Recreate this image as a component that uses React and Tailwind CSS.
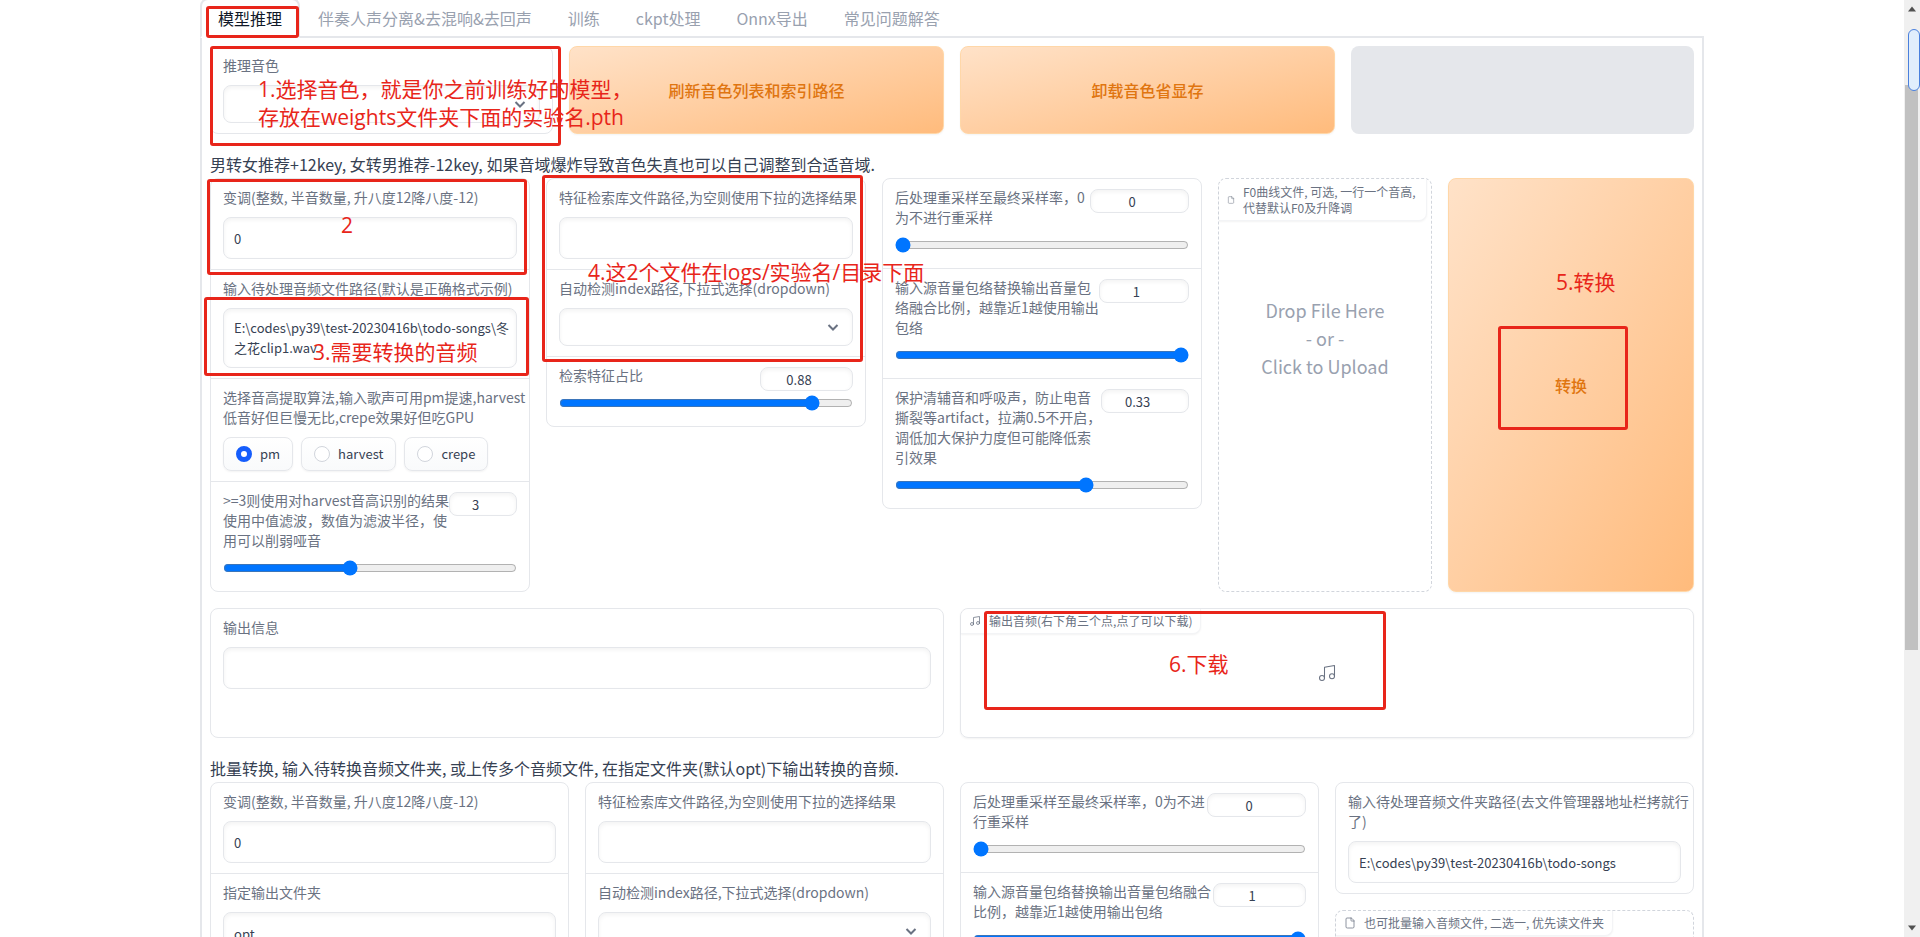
import React, { useId, useState } from 'react';
import { File as FileIcon, Music } from 'lucide-react';

const tabs = ['模型推理', '伴奏人声分离&去混响&去回声', '训练', 'ckpt处理', 'Onnx导出', '常见问题解答'];

const fieldClass =
  'block w-full rounded-lg border border-gray-200 bg-white text-[13px] text-gray-700 shadow-[inset_0_2px_4px_0_rgba(0,0,0,0.05)] outline-none';

// Form group: bordered card, blocks are separated by a thin line
function Form({ children, className = '' }) {
  return (
    <div className={`divide-y divide-gray-200 rounded-lg border border-gray-200 bg-white ${className}`}>
      {children}
    </div>
  );
}

function Label({ htmlFor, children }) {
  return (
    <label htmlFor={htmlFor} className="mb-2.5 block shrink-0 text-sm leading-5 whitespace-pre text-gray-500">
      {children}
    </label>
  );
}

function TextField({ label, value = '', multiline = false }) {
  const id = useId();
  const [text, setText] = useState(value);
  return (
    <div className="px-3 pt-2 pb-2.5">
      <Label htmlFor={id}>{label}</Label>
      {multiline ? (
        <textarea
          id={id}
          value={text}
          onChange={(e) => setText(e.target.value)}
          className={`${fieldClass} h-[60px] resize-none overflow-hidden py-[9px] pr-1 pl-2.5 leading-5 break-all`}
        />
      ) : (
        <input
          id={id}
          type="text"
          value={text}
          onChange={(e) => setText(e.target.value)}
          className={`${fieldClass} h-[42px] px-2.5`}
        />
      )}
    </div>
  );
}

function Dropdown({ label }) {
  const id = useId();
  return (
    <div className="px-3 pt-2 pb-2.5">
      <Label htmlFor={id}>{label}</Label>
      <div className="relative">
        <select id={id} className={`${fieldClass} h-[38px] appearance-none px-2.5`}>
          <option value=""></option>
        </select>
        <svg
          className="pointer-events-none absolute top-1/2 right-3.5 h-3 w-3 -translate-y-1/2 text-gray-500"
          viewBox="0 0 12 12"
          fill="none"
          stroke="currentColor"
          strokeWidth={2}
        >
          <path d="M1.5 4l4.5 4.5L10.5 4" />
        </svg>
      </div>
    </div>
  );
}

function Slider({ label, value, min = 0, max = 1, step = 0.01, box = 'w-[93px]' }) {
  const id = useId();
  const [current, setCurrent] = useState(value);
  return (
    <div className="px-3 pt-2 pb-[15px]">
      <div className="flex items-start justify-between">
        <Label htmlFor={id}>{label}</Label>
        <input
          type="number"
          aria-label={label}
          value={current}
          min={min}
          max={max}
          step={step}
          onChange={(e) => setCurrent(e.target.value)}
          className={`${box} mt-0.5 h-6 min-w-0 rounded-lg border border-gray-200 bg-white px-2 text-center text-[13px] text-gray-700 shadow-[inset_0_2px_4px_0_rgba(0,0,0,0.05)] outline-none`}
        />
      </div>
      <input
        id={id}
        type="range"
        value={current}
        min={min}
        max={max}
        step={step}
        onChange={(e) => setCurrent(e.target.value)}
        className="block h-4 w-full accent-[#0075ff]"
      />
    </div>
  );
}

function RadioGroup({ label, options }) {
  const name = useId();
  const [selected, setSelected] = useState(options[0]);
  return (
    <fieldset className="w-full min-w-0 px-3 pt-2 pb-2.5">
      <legend className="float-left mb-2.5 w-full text-sm leading-5 whitespace-pre text-gray-500">{label}</legend>
      <div className="clear-both flex gap-2">
        {options.map((option) => (
          <label
            key={option}
            className="flex h-[34px] items-center gap-2 rounded-lg border border-gray-200 bg-gradient-to-b from-white to-gray-50 px-3 text-[13px] text-gray-700 shadow-xs"
          >
            <input
              type="radio"
              name={name}
              checked={selected === option}
              onChange={() => setSelected(option)}
              className="h-4 w-4 appearance-none rounded-full border border-gray-300 bg-white checked:border-5 checked:border-blue-600"
            />
            {option}
          </label>
        ))}
      </div>
    </fieldset>
  );
}

function PrimaryButton({ children }) {
  return (
    <button
      type="button"
      className="rounded-lg border border-orange-200 bg-linear-to-br from-[#ffe2c8] to-[#ffbb7c] text-base font-medium text-[#e07510] shadow-xs"
    >
      {children}
    </button>
  );
}

// Small caption in the top left corner of a file or audio block
function BlockLabel({ icon: Icon, iconSize = 'h-3 w-3', children, className = '' }) {
  return (
    <div
      className={`flex items-center gap-2 rounded-tl-lg rounded-br-lg border-r border-b border-gray-100 bg-white px-2 py-1 text-xs leading-4 text-gray-500 shadow-xs ${className}`}
    >
      <Icon className={`${iconSize} shrink-0 text-gray-500`} strokeWidth={1.5} />
      <span className="whitespace-pre">{children}</span>
    </div>
  );
}

// Red frames and notes over the page
function Mark({ className }) {
  return <div className={`absolute rounded-[3px] border-3 border-[#e8251a] ${className}`} />;
}

function Note({ className, children }) {
  return (
    <p
      className={`absolute font-['Open_Sans','Noto_Sans_CJK_SC',sans-serif] text-[21px] leading-7 whitespace-pre text-[#e8251a] ${className}`}
    >
      {children}
    </p>
  );
}

function Notes() {
  return (
    <div className="pointer-events-none absolute inset-0">
      <Mark className="top-[6px] left-[6px] h-[32px] w-[93px]" />
      <Mark className="top-[46px] left-[10px] h-[100px] w-[351px]" />
      <Mark className="top-[179px] left-[7px] h-[96px] w-[320px]" />
      <Mark className="top-[297px] left-[4px] h-[79px] w-[325px]" />
      <Mark className="top-[175px] left-[342px] h-[187px] w-[321px]" />
      <Mark className="top-[326px] left-[1298px] h-[104px] w-[130px]" />
      <Mark className="top-[611px] left-[784px] h-[99px] w-[402px]" />
      <Note className="top-[75px] left-[58px]">{'1.选择音色，就是你之前训练好的模型，\n存放在weights文件夹下面的实验名.pth'}</Note>
      <Note className="top-[211px] left-[141px]">2</Note>
      <Note className="top-[338px] left-[113px]">3.需要转换的音频</Note>
      <Note className="top-[258px] left-[388px]">4.这2个文件在logs/实验名/目录下面</Note>
      <Note className="top-[268px] left-[1356px]">5.转换</Note>
      <Note className="top-[650px] left-[969px]">6.下载</Note>
    </div>
  );
}

function ScrollBar() {
  return (
    <div className="relative flex w-4 shrink-0 flex-col items-center justify-between bg-[#f0f0f0] py-1.5">
      <svg className="h-1.5 w-2" viewBox="0 0 8 5" fill="#505050">
        <path d="M4 0l4 5H0z" />
      </svg>
      <svg className="h-1.5 w-2" viewBox="0 0 8 5" fill="#505050">
        <path d="M4 5L0 0h8z" />
      </svg>
      <div className="absolute top-[85px] left-px h-[565px] w-[13px] bg-[#c1c1c1]" />
      <div className="absolute top-[29px] right-0 h-[62px] w-3 rounded-full border border-[#4a80dd] bg-[#e1eefc]" />
    </div>
  );
}

export default function App() {
  const [tab, setTab] = useState(0);

  return (
    <div className="flex h-screen overflow-hidden bg-white font-['Noto_Sans_CJK_SC',sans-serif]">
      <main className="min-w-0 flex-1 overflow-hidden">
        <div className="relative mx-auto flow-root max-w-[1504px]">
          {/* Tabs */}
          <nav className="-mt-0.5 -mb-0.5 flex">
            {tabs.map((name, i) => (
              <button
                key={name}
                type="button"
                onClick={() => setTab(i)}
                className={
                  i === tab
                    ? 'relative h-10 rounded-t-lg border-2 border-gray-200 border-b-white bg-white px-4 text-base text-gray-900'
                    : 'h-10 border-2 border-transparent px-4 text-base text-gray-400'
                }
              >
                {name}
              </button>
            ))}
          </nav>

          <div className="flex flex-col gap-4 border-2 border-gray-200 p-2">
            <div className="grid grid-cols-[343fr_375fr_375fr_343fr] gap-4">
              <Form>
                <Dropdown label="推理音色" />
              </Form>
              <PrimaryButton>刷新音色列表和索引路径</PrimaryButton>
              <PrimaryButton>卸载音色省显存</PrimaryButton>
              <div className="rounded-lg bg-gray-200" />
            </div>

            <div>
              <p className="text-base leading-7 text-gray-700">
                男转女推荐+12key, 女转男推荐-12key, 如果音域爆炸导致音色失真也可以自己调整到合适音域.
              </p>
              <div className="grid grid-cols-[minmax(0,320fr)_minmax(0,320fr)_minmax(0,320fr)_minmax(0,214fr)_minmax(0,246fr)] gap-4">
                <Form>
                  <TextField label="变调(整数, 半音数量, 升八度12降八度-12)" value="0" />
                  <TextField
                    label="输入待处理音频文件路径(默认是正确格式示例)"
                    value="E:\codes\py39\test-20230416b\todo-songs\冬之花clip1.wav"
                    multiline
                  />
                  <RadioGroup
                    label={'选择音高提取算法,输入歌声可用pm提速,harvest\n低音好但巨慢无比,crepe效果好但吃GPU'}
                    options={['pm', 'harvest', 'crepe']}
                  />
                  <Slider
                    label={'>=3则使用对harvest音高识别的结果\n使用中值滤波，数值为滤波半径，使\n用可以削弱哑音'}
                    value={3}
                    max={7}
                    step={1}
                    box="w-[73px]"
                  />
                </Form>

                <Form className="self-start">
                  <TextField label="特征检索库文件路径,为空则使用下拉的选择结果" />
                  <Dropdown label="自动检测index路径,下拉式选择(dropdown)" />
                  <Slider label="检索特征占比" value={0.88} />
                </Form>

                <Form className="self-start">
                  <Slider
                    label={'后处理重采样至最终采样率，0\n为不进行重采样'}
                    value={0}
                    max={48000}
                    step={1}
                    box="w-[99px]"
                  />
                  <Slider label={'输入源音量包络替换输出音量包\n络融合比例，越靠近1越使用输出\n包络'} value={1} />
                  <Slider
                    label={'保护清辅音和呼吸声，防止电音\n撕裂等artifact，拉满0.5不开启，\n调低加大保护力度但可能降低索\n引效果'}
                    value={0.33}
                    max={0.5}
                  />
                </Form>

                <div className="flex flex-col rounded-lg border border-dashed border-gray-300">
                  <BlockLabel icon={FileIcon} iconSize="h-2 w-2" className="mr-1 h-[42px]">
                    {'F0曲线文件, 可选, 一行一个音高,\n代替默认F0及升降调'}
                  </BlockLabel>
                  <button type="button" className="mt-[75px] text-lg leading-7 text-gray-400">
                    Drop File Here
                    <br />- or -<br />
                    Click to Upload
                  </button>
                </div>

                <PrimaryButton>转换</PrimaryButton>
              </div>
            </div>

            <div className="grid grid-cols-2 gap-4">
              <Form className="pb-[38px]">
                <TextField label="输出信息" />
              </Form>
              <div className="relative flex items-center justify-center rounded-lg border border-gray-200 shadow-xs">
                <div className="absolute top-0 left-0">
                  <BlockLabel icon={Music}>输出音频(右下角三个点,点了可以下载)</BlockLabel>
                </div>
                <Music className="h-5 w-5 text-gray-500" strokeWidth={1.25} />
              </div>
            </div>

            <div>
              <p className="text-base leading-7 text-gray-700">
                批量转换, 输入待转换音频文件夹, 或上传多个音频文件, 在指定文件夹(默认opt)下输出转换的音频.
              </p>
              <div className="grid grid-cols-4 gap-4">
                <Form>
                  <TextField label="变调(整数, 半音数量, 升八度12降八度-12)" value="0" />
                  <TextField label="指定输出文件夹" value="opt" />
                </Form>
                <Form>
                  <TextField label="特征检索库文件路径,为空则使用下拉的选择结果" />
                  <Dropdown label="自动检测index路径,下拉式选择(dropdown)" />
                </Form>
                <Form>
                  <Slider
                    label={'后处理重采样至最终采样率，0为不进\n行重采样'}
                    value={0}
                    max={48000}
                    step={1}
                    box="w-[99px]"
                  />
                  <Slider label={'输入源音量包络替换输出音量包络融合\n比例，越靠近1越使用输出包络'} value={1} />
                </Form>
                <div className="flex flex-col gap-4">
                  <Form>
                    <TextField
                      label={'输入待处理音频文件夹路径(去文件管理器地址栏拷就行\n了)'}
                      value="E:\codes\py39\test-20230416b\todo-songs"
                    />
                  </Form>
                  <div className="flex flex-1 items-start rounded-lg border border-dashed border-gray-300">
                    <BlockLabel icon={FileIcon}>也可批量输入音频文件, 二选一, 优先读文件夹</BlockLabel>
                  </div>
                </div>
              </div>
            </div>
          </div>

          <Notes />
        </div>
      </main>
      <ScrollBar />
    </div>
  );
}
